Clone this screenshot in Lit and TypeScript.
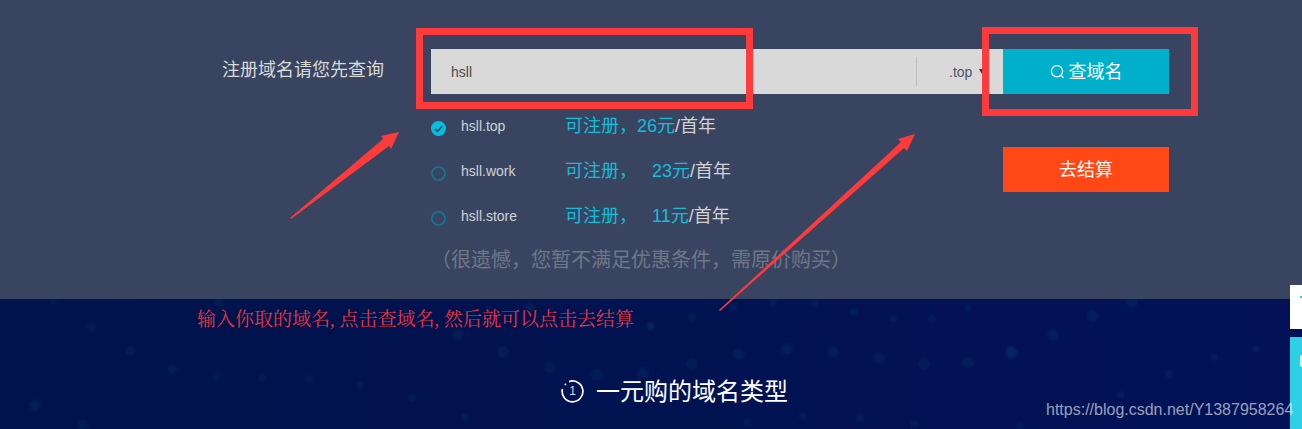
import { LitElement, html, css, svg } from "lit";
import { customElement } from "lit/decorators.js";

const DOTS: [number, number, number][] = [
  [219,302,5],[530,307,5],[458,335,6],[503,352,6],[550,367,6],[597,375,6],[643,373,6],[650,326,4],
  [216,377,4],[262,378,4],[309,379,4],[360,385,4],[412,398,4],[465,417,4],
  [1132,302,6],[1093,316,6],[1053,335,6],[1011,353,6],[1256,349,4],[1214,357,4],[1169,374,4],[1121,395,4],[1020,427,4],
  [773,302,4],[815,304,4],[854,312,4],[968,308,4],[893,318,4],[932,318,4],[692,317,4],[651,326,4],[733,307,4],
  [787,349,6],[739,354,6],[692,364,6],[833,352,6],[879,358,6],[924,364,6],[968,363,6],[1011,352,6],
  [803,416,4],[747,422,4],[860,418,4],[914,424,4],
  [53,300,4],[91,326,5],[130,351,5],[172,369,5],[35,405,6],[83,425,6],
];

const OPTIONS = [
  { name: "hsll.top", gap: "", price: "26", checked: true },
  { name: "hsll.work", gap: "\u00a0\u00a0\u00a0", price: "23", checked: false },
  { name: "hsll.store", gap: "\u00a0\u00a0\u00a0", price: "11", checked: false },
];

@customElement("app-root")
export class AppRoot extends LitElement {
  static styles = css`
    :host {
      display: block;
      position: relative;
      width: 100%;
      height: 429px;
      overflow: hidden;
      font-family: "Liberation Sans", "Noto Sans CJK SC", sans-serif;
      background: #00124e;
    }
    .top {
      height: 299px;
      box-sizing: border-box;
      padding: 49px 0 0 222px;
      background: #394560;
      display: grid;
      grid-template-columns: 209px 572px 166px;
      grid-template-rows: 45px auto;
      align-content: start;
    }
    .label {
      font-size: 18px;
      color: #d9d9d9;
      line-height: 43px;
      white-space: nowrap;
    }
    .field {
      background: #d9d9d9;
      display: flex;
      align-items: center;
      padding-left: 20px;
      font-size: 14px;
      color: #4a4a4a;
    }
    .value { flex: 1; }
    .divider { width: 1px; height: 29px; background: #bdbdbd; }
    .suffix {
      width: 86px;
      box-sizing: border-box;
      padding-left: 32px;
      display: flex;
      align-items: center;
      gap: 7px;
      color: #4b5566;
    }
    .caret {
      width: 0;
      height: 0;
      border-left: 3px solid transparent;
      border-right: 3px solid transparent;
      border-top: 5px solid #333;
    }
    .btn {
      display: flex;
      align-items: center;
      justify-content: center;
      gap: 4px;
      color: #fff;
      font-size: 18px;
      height: 45px;
    }
    .btn span { margin-bottom: 3px; }
    .search { background: #00b0ca; }
    .checkout { background: #ff4816; margin-top: 53px; }
    .options { grid-column: 2; margin-top: 10px; }
    .row { display: flex; align-items: center; height: 45px; }
    .radio {
      width: 15px;
      height: 15px;
      margin: 4px 15px 0 0;
      flex: none;
    }
    .name { width: 104px; font-size: 14px; color: #cfd2d6; flex: none; margin-bottom: 1px; }
    .price { font-size: 18px; color: #10bddb; white-space: nowrap; margin-bottom: 5px; }
    .unit { color: #d2d2d2; }
    .hint { font-size: 20px; line-height: 40px; padding-top: 1px; color: #6f7787; white-space: nowrap; }
    .bottom {
      position: relative;
      height: 130px;
      box-sizing: border-box;
      padding: 71px 0 0 561px;
      background: linear-gradient(90deg, #00134a, #031258);
    }
    .dots { position: absolute; left: 0; top: 0; filter: blur(1px); }
    .title {
      position: relative;
      display: flex;
      align-items: center;
      gap: 12px;
      color: #fff;
      font-size: 24px;
      height: 38px;
      white-space: nowrap;
    }
    .clock { position: relative; width: 23px; height: 23px; margin-top: 5px; }
    .clock span {
      position: absolute;
      inset: 0;
      text-align: center;
      font-size: 12px;
      line-height: 23px;
      color: #d5d8e2;
    }
    .overlay { position: absolute; left: 0; top: 0; pointer-events: none; }
    .note {
      position: absolute;
      left: 197px;
      top: 307px;
      font-family: "Liberation Serif", "Noto Serif CJK SC", "Noto Sans CJK SC", serif;
      font-size: 19px;
      line-height: 26px;
      color: #e8363e;
      white-space: nowrap;
    }
    .mark {
      position: absolute;
      left: 1046px;
      top: 401px;
      font-size: 16px;
      line-height: 18px;
      color: rgba(255, 255, 255, 0.6);
      white-space: nowrap;
      z-index: 2;
    }
    .float { position: absolute; right: 0; width: 12px; }
    .float-a { top: 285px; height: 44px; background: #fff; }
    .float-a::before {
      content: "";
      position: absolute;
      left: 10px;
      top: 11px;
      width: 2px;
      height: 2px;
      background: #2fd0e6;
    }
    .float-b { top: 337px; height: 92px; background: #2fd0e6; }
    .float-b::before {
      content: "";
      position: absolute;
      left: 10px;
      top: 18px;
      width: 2px;
      height: 12px;
      background: #e6f9fc;
      border-radius: 2px 0 0 2px;
    }
  `;

  private radio(checked: boolean) {
    return checked
      ? html`<svg class="radio" viewBox="0 0 15 15"><circle cx="7.5" cy="7.5" r="7.5" fill="#00c0e0"/><path d="M3.8 7.8 6.4 10.3 11.2 5.2" fill="none" stroke="#394560" stroke-width="1.7"/></svg>`
      : html`<svg class="radio" viewBox="0 0 15 15"><circle cx="7.5" cy="7.5" r="6.6" fill="none" stroke="#14738f" stroke-width="1.8"/></svg>`;
  }

  render() {
    return html`
      <section class="top">
        <div class="label">注册域名请您先查询</div>
        <div class="field">
          <span class="value">hsll</span>
          <span class="divider"></span>
          <span class="suffix">.top<i class="caret"></i></span>
        </div>
        <div class="btn search">
          <svg width="15" height="15" viewBox="0 0 15 15" fill="none" stroke="#fff" stroke-width="1.3">
            <circle cx="7" cy="7.3" r="5.6"/><path d="M11 11.4 13.4 13.8"/>
          </svg>
          <span>查域名</span>
        </div>
        <div class="options">
          ${OPTIONS.map(
            (o) => html`<div class="row">
              ${this.radio(o.checked)}
              <span class="name">${o.name}</span>
              <span class="price">可注册，${o.gap}${o.price}元<span class="unit">/首年</span></span>
            </div>`
          )}
          <div class="hint">（很遗憾，您暂不满足优惠条件，需原价购买）</div>
        </div>
        <div class="btn checkout"><span>去结算</span></div>
      </section>
      <section class="bottom">
        <svg class="dots" width="1302" height="130" viewBox="0 299 1302 130">
          ${DOTS.map(([x, y, r]) => svg`<circle cx=${x} cy=${y} r=${r} fill="#0f5a78" fill-opacity="0.16"/>`)}
        </svg>
        <div class="title">
          <div class="clock">
            <svg width="23" height="23" viewBox="0 0 23 23" fill="none" stroke="#fff" stroke-width="1.7">
              <path d="M8 1.6A10.4 10.4 0 1 1 1.4 9"/>
              <circle cx="4.4" cy="4.4" r="0.9" fill="#fff" stroke="none"/>
            </svg>
            <span>1</span>
          </div>
          <span>一元购的域名类型</span>
        </div>
      </section>
      <div class="float float-a"></div>
      <div class="float float-b"></div>
      <svg class="overlay" width="1302" height="429" viewBox="0 0 1302 429">
        <g fill="none" stroke="#ff3a3a" stroke-width="7">
          <rect x="419.5" y="31.5" width="330" height="74"/>
          <rect x="985.5" y="30.5" width="209" height="82"/>
        </g>
        <g fill="#ff3a3a">
          <polygon points="290,218 291,219 389,146 391,149 399,132 381,136 383,139"/>
          <polygon points="719,310 720,311 904,148 907,151 915,134 898,139 901,142"/>
        </g>
      </svg>
      <div class="note">输入你取的域名, 点击查域名, 然后就可以点击去结算</div>
      <div class="mark">https://blog.csdn.net/Y1387958264</div>
    `;
  }
}
